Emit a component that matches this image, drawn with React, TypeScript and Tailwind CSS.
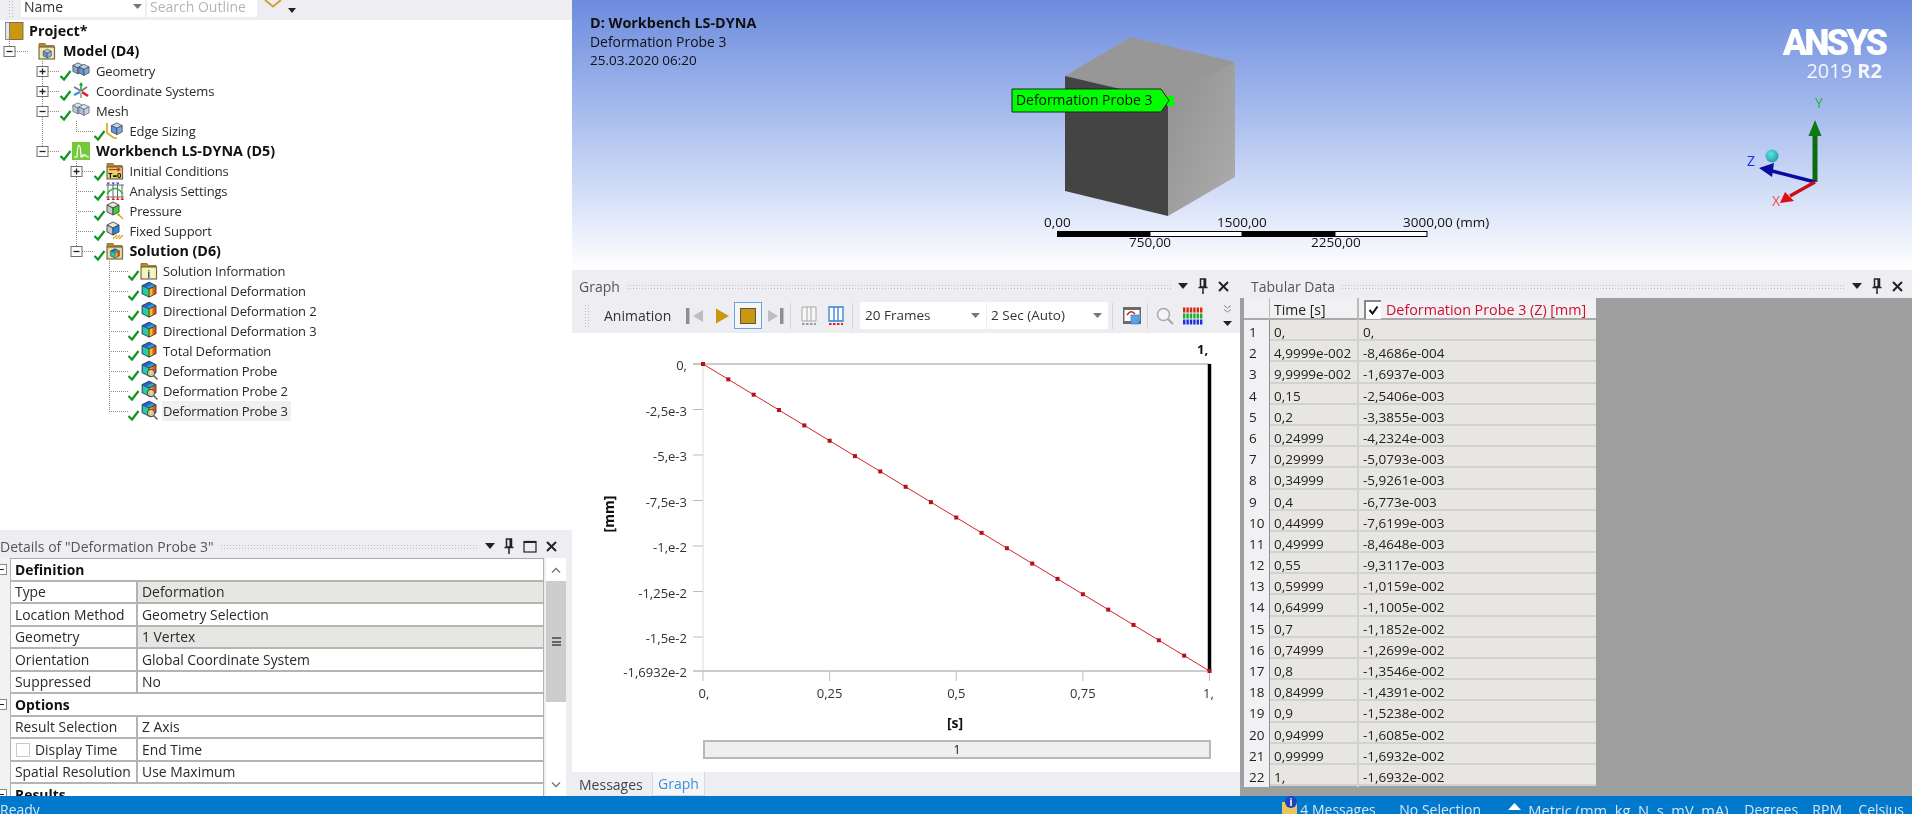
import React from "react";

const INK = "#222";

function Cube({ x = 0, y = 0, s = 1, t, l, r, e = "#4a4a4a" }: { x?: number; y?: number; s?: number; t: string; l: string; r: string; e?: string }) {
  return (
    <g transform={`translate(${x} ${y}) scale(${s})`} stroke={e} strokeWidth={0.9} strokeLinejoin="round">
      <polygon points="7,1 13,4 7,7 1,4" fill={t} />
      <polygon points="1,4 7,7 7,14 1,11" fill={l} />
      <polygon points="7,7 13,4 13,11 7,14" fill={r} />
    </g>
  );
}

function Folder({ fill = "#f4e9a8" }: { fill?: string }) {
  return (
    <g>
      <path d="M1 5 V1.5 H7 L8.5 3.5 H16 V5 Z" fill="#b98a1e" stroke="#7d5f16" strokeWidth={0.7} />
      <rect x={1} y={5} width={15.5} height={12} fill={fill} stroke="#6f6a58" strokeWidth={1.2} />
    </g>
  );
}

function Rainbow({ x = 0, y = 0, s = 1 }: { x?: number; y?: number; s?: number }) {
  return (
    <g transform={`translate(${x} ${y}) scale(${s})`} strokeLinejoin="round">
      <polygon points="7,1 13,4 7,7 1,4" fill="#15a9e0" />
      <polygon points="7,1 10,2.5 4,5.5 1,4" fill="#2a5de0" />
      <polygon points="1,4 7,7 7,14 1,11" fill="#35d27a" />
      <polygon points="1,4 4,5.5 4,12.5 1,11" fill="#19c7d8" />
      <polygon points="7,7 13,4 13,11 7,14" fill="#f2c21a" />
      <polygon points="10,5.5 13,4 13,11 10,12.5" fill="#e8531c" />
      <path d="M7 1 13 4 13 11 7 14 1 11 1 4Z M1 4 7 7 13 4 M7 7 V14" fill="none" stroke="#444" strokeWidth={0.9} />
    </g>
  );
}

function Icon({ name }: { name: string }) {
  switch (name) {
    case "book":
      return (
        <g>
          <rect x={4} y={0.5} width={14} height={17} fill="#c9980f" stroke="#5f5a48" strokeWidth={0.8} />
          <rect x={0.5} y={0.5} width={4} height={17} fill="#e6e6e6" stroke="#777" strokeWidth={0.8} />
        </g>
      );
    case "model":
      return (
        <g>
          <Folder />
          <Cube x={4.5} y={6.5} s={0.68} t="#a9c8ec" l="#5f95d8" r="#7db0e6" />
        </g>
      );
    case "geometry":
      return (
        <g>
          <Cube x={0} y={0} s={0.85} t="#bcd4ef" l="#7fa9dc" r="#95bbe6" />
          <Cube x={6} y={1.5} s={0.85} t="#bcd4ef" l="#5f95d8" r="#78a9e2" />
        </g>
      );
    case "mesh":
      return (
        <g>
          <Cube x={0} y={0} s={0.85} t="#dbe6f3" l="#b7c9df" r="#c6d6e9" e="#667" />
          <Cube x={6} y={1.5} s={0.85} t="#dbe6f3" l="#aebfd6" r="#c1d2e6" e="#667" />
        </g>
      );
    case "coord":
      return (
        <g strokeWidth={1.6} fill="none">
          <path d="M9 9 V2" stroke="#1aa82c" />
          <polygon points="9,0 6.8,3.5 11.2,3.5" fill="#1aa82c" />
          <path d="M9 9 L2 5" stroke="#777" />
          <path d="M9 9 L15 5" stroke="#777" />
          <path d="M8 10 L2 13" stroke="#3f8fe6" strokeWidth={2.4} />
          <path d="M10 10 L16 14" stroke="#e21b1b" strokeWidth={2.4} />
          <path d="M9 11 V16" stroke="#999" />
        </g>
      );
    case "edge":
      return (
        <g>
          <path d="M1 1 V11 L8 16 H11" fill="none" stroke="#d9a61e" strokeWidth={1.6} />
          <Cube x={4.5} y={0} s={0.9} t="#bcd4ef" l="#5f95d8" r="#78a9e2" />
        </g>
      );
    case "dyna":
      return (
        <g>
          <rect x={0} y={0} width={18} height={18} fill="#74c83c" />
          <path d="M2 15 H5 Q5.5 3 7 3 Q8.5 3 9 15 H10 Q11 11 12 14 Q13.5 11.5 15 15 H17" fill="none" stroke="#fff" strokeWidth={1.2} />
        </g>
      );
    case "initial":
      return (
        <g>
          <Folder fill="#e9d36a" />
          <path d="M3 7.5 H12.5" stroke="#d3271b" strokeWidth={1.2} />
          <polygon points="15,7.5 11.5,5.2 11.5,9.8" fill="#d3271b" />
          <text x={8.8} y={16} textAnchor="middle" className="text-[7.5px] font-bold" fill="#111">T=0</text>
        </g>
      );
    case "analysis":
      return (
        <g>
          <path d="M2 3 V15 M7 3 V15 M11.5 3 V15 M16 3 V15 M0 15 H18 M0 3 H18" stroke="#555" strokeWidth={0.9} fill="none" />
          <path d="M1 12 Q9 1 17 12" stroke="#2cb43a" strokeWidth={1.4} fill="none" />
          <path d="M0.5 0.5 H4 L2.2 3Z M5.5 0.5 H9 L7.2 3Z M10 0.5 H13.5 L11.7 3Z" fill="#2b4fd8" />
          <path d="M0.5 18 H4 L2.2 15Z M5.5 18 H9 L7.2 15Z M10 18 H13.5 L11.7 15Z M14.5 18 H18 L16.2 15Z" fill="#e2231a" />
        </g>
      );
    case "pressure":
      return (
        <g>
          <Cube x={0} y={-1} t="#e6e6e6" l="#c8c8c8" r="#35d43a" e="#444" />
          <path d="M12 12 L17 17" stroke="#d9a61e" strokeWidth={1.4} />
          <polygon points="11,11 14.5,12 12,14.5" fill="#d9a61e" />
        </g>
      );
    case "fixed":
      return (
        <g>
          <Cube x={0} y={-1} t="#e6e6e6" l="#c8c8c8" r="#1e88e8" e="#444" />
          <path d="M7 17 L11 13 M10 17 L14 13 M13 17 L17 13" stroke="#d9a61e" strokeWidth={1.2} />
        </g>
      );
    case "solution":
      return (
        <g>
          <Folder fill="#ead9a0" />
          <Rainbow x={4} y={6} s={0.72} />
        </g>
      );
    case "info":
      return (
        <g>
          <Folder fill="#fbf3b4" />
          <text x={8.8} y={15.5} textAnchor="middle" className="text-[10px] font-bold" fill="#1a5fd0">i</text>
        </g>
      );
    case "defo":
      return <Rainbow x={1} y={-1} s={1.15} />;
    case "probe":
      return (
        <g>
          <Rainbow x={1} y={-2} s={1.15} />
          <circle cx={11} cy={11} r={3.6} fill="#e8e2b0" fillOpacity={0.75} stroke="#555" strokeWidth={1.1} />
          <path d="M13.6 13.6 L17.5 17.5" stroke="#666" strokeWidth={1.6} />
        </g>
      );
    default:
      return null;
  }
}

type Node = { label: string; level: number; exp?: "+" | "-"; icon: string; bold?: boolean; next?: boolean; pass?: number[]; sel?: boolean };

const tree: Node[] = [
  { label: "Project*", level: 0, icon: "book", bold: true },
  { label: "Model (D4)", level: 1, exp: "-", icon: "model", bold: true },
  { label: "Geometry", level: 2, exp: "+", icon: "geometry", next: true },
  { label: "Coordinate Systems", level: 2, exp: "+", icon: "coord", next: true },
  { label: "Mesh", level: 2, exp: "-", icon: "mesh", next: true },
  { label: "Edge Sizing", level: 3, icon: "edge", pass: [42] },
  { label: "Workbench LS-DYNA (D5)", level: 2, exp: "-", icon: "dyna", bold: true },
  { label: "Initial Conditions", level: 3, exp: "+", icon: "initial", next: true },
  { label: "Analysis Settings", level: 3, icon: "analysis", next: true },
  { label: "Pressure", level: 3, icon: "pressure", next: true },
  { label: "Fixed Support", level: 3, icon: "fixed", next: true },
  { label: "Solution (D6)", level: 3, exp: "-", icon: "solution", bold: true },
  { label: "Solution Information", level: 4, icon: "info", next: true },
  { label: "Directional Deformation", level: 4, icon: "defo", next: true },
  { label: "Directional Deformation 2", level: 4, icon: "defo", next: true },
  { label: "Directional Deformation 3", level: 4, icon: "defo", next: true },
  { label: "Total Deformation", level: 4, icon: "defo", next: true },
  { label: "Deformation Probe", level: 4, icon: "probe", next: true },
  { label: "Deformation Probe 2", level: 4, icon: "probe", next: true },
  { label: "Deformation Probe 3", level: 4, icon: "probe", sel: true },
];

const guideX = [9, 9, 42, 76, 109];
const iconX = [5, 38, 72, 106, 140];
const textX = [29, 63, 96, 129.5, 163];

function TreeRow({ n }: { n: Node }) {
  const g = guideX[n.level];
  const ic = iconX[n.level];
  const w = textX[n.level];
  const dots = { stroke: "#8a8a8a", strokeDasharray: "1 1", strokeWidth: 1 };
  return (
    <div className="flex h-5 items-center">
      <svg width={w} height={20} className="shrink-0 overflow-visible">
        {(n.pass ?? []).map((p) => (
          <line key={p} x1={p + 0.5} x2={p + 0.5} y1={0} y2={20} {...dots} />
        ))}
        {n.level > 0 && <line x1={g + 0.5} x2={g + 0.5} y1={0} y2={n.next ? 20 : 10} {...dots} />}
        {n.level > 0 && <line x1={g} x2={n.level === 1 ? 28 : ic - 12} y1={10.5} y2={10.5} {...dots} />}
        {n.exp && (
          <g>
            <rect x={g - 5} y={5.5} width={11} height={10} fill="#fff" stroke="#6f6f6f" strokeWidth={1} />
            <path d={n.exp === "+" ? `M${g - 2.5} 10.5 H${g + 3.5} M${g + 0.5} 7.5 V13.5` : `M${g - 2.5} 10.5 H${g + 3.5}`} stroke="#222" strokeWidth={1.3} />
          </g>
        )}
        {n.level >= 2 && (
          <polyline points={`${ic - 11.5},15 ${ic - 8},18.5 ${ic - 1.5},10`} fill="none" stroke="#0f9420" strokeWidth={2.2} />
        )}
        <g transform={`translate(${ic} 1)`}>
          <Icon name={n.icon} />
        </g>
      </svg>
      <span className={`whitespace-nowrap leading-5 ${n.bold ? "text-[14.3px] font-bold text-[#111]" : "text-[13px] tracking-[-0.15px] text-[#2a2a2a]"} ${n.sel ? "-ml-[1px] bg-[#f0f0f0] pl-[1px] pr-[3px]" : ""}`}>{n.label}</span>
    </div>
  );
}

function Tools({ square }: { square?: boolean }) {
  return (
    <div className={`flex shrink-0 items-center ${square ? "gap-[9px]" : "gap-[10px]"}`}>
      <svg width={10} height={6}><polygon points="0,0 10,0 5,6" fill="#222" /></svg>
      <svg width={10} height={16}>
        <path d="M2.5 1 H7.5 V9 H2.5 Z M6.2 1.5 V9" fill="none" stroke="#222" strokeWidth={1.5} />
        <path d="M0.5 9.5 H9.5 M5 10 V16" stroke="#222" strokeWidth={1.5} />
      </svg>
      {square && (
        <svg width={14} height={13}>
          <rect x={1} y={1.5} width={12} height={10.5} fill="none" stroke="#222" strokeWidth={1.2} />
          <path d="M1 2 H13" stroke="#222" strokeWidth={2} />
        </svg>
      )}
      <svg width={11} height={11}><path d="M1 1 L10 10 M10 1 L1 10" stroke="#222" strokeWidth={2} /></svg>
    </div>
  );
}

function PaneHeader({ title, square, className }: { title: string; square?: boolean; className: string }) {
  return (
    <div className={`flex h-6 shrink-0 items-center gap-[6px] bg-[#eeeef2] ${className}`}>
      <span className="whitespace-nowrap text-[14px] text-[#555]">{title}</span>
      <div className="h-[5px] flex-1 bg-[radial-gradient(#bfc0c4_0.7px,transparent_0.8px)] bg-[length:3px_3px]" />
      <Tools square={square} />
    </div>
  );
}

const details: [string, string?, boolean?][] = [
  ["Definition"],
  ["Type", "Deformation", true],
  ["Location Method", "Geometry Selection"],
  ["Geometry", "1 Vertex", true],
  ["Orientation", "Global Coordinate System"],
  ["Suppressed", "No"],
  ["Options"],
  ["Result Selection", "Z Axis"],
  ["Display Time", "End Time"],
  ["Spatial Resolution", "Use Maximum"],
  ["Results"],
];

function Details() {
  return (
    <div className="flex min-h-0 flex-1 overflow-hidden">
      <div className="w-[10px] shrink-0 bg-[#f2f2f2]">
        {details.map(([k, v]) => (
          <div key={k} className="flex h-[22.5px] items-center">
            {v === undefined && (
              <div className="flex h-[11px] w-[7px] items-center border border-l-0 border-[#8a8a8a] bg-white">
                <div className="h-[1px] w-[4px] bg-[#222]" />
              </div>
            )}
          </div>
        ))}
      </div>
      <div className="w-[534px] shrink-0 border-t border-[#aaa] bg-white">
        {details.map(([k, v, grey]) =>
          v === undefined ? (
            <div key={k} className="flex h-[22.5px] items-center border-b-2 border-l border-r border-[#b4b4b4] pl-[4px] pt-[2px] text-[13.9px] font-bold text-[#111]">{k}</div>
          ) : (
            <div key={k} className="flex h-[22.5px] border-b-2 border-l border-r border-[#b4b4b4] text-[13.9px] text-[#2a2a2a]">
              <div className="flex w-[127px] shrink-0 items-center whitespace-nowrap border-r-2 border-[#b4b4b4] pl-[4px] pt-[2px]">
                {k === "Display Time" && <div className="mr-[5px] ml-[1px] h-[14px] w-[14px] border border-[#c8c8c8] bg-white" />}
                {k}
              </div>
              <div className={`flex flex-1 items-center pl-[4px] pt-[2px] ${grey ? "bg-[#e8e6e3]" : ""}`}>{v}</div>
            </div>
          ),
        )}
      </div>
      <div className="ml-[2px] flex w-[20px] shrink-0 flex-col bg-white">
        <div className="flex h-[23px] shrink-0 items-center justify-center">
          <svg width={10} height={6}><path d="M1 5.5 L5 1.5 L9 5.5" fill="none" stroke="#777" strokeWidth={1.4} /></svg>
        </div>
        <div className="flex h-[121px] shrink-0 items-center justify-center bg-[#cdcdcd]">
          <div className="h-[9px] w-[9px] border-y-2 border-[#666] py-[1.5px]"><div className="h-[2px] bg-[#666]" /></div>
        </div>
        <div className="flex-1" />
        <div className="flex h-[22px] shrink-0 items-center justify-center pb-[1px]">
          <svg width={10} height={6}><path d="M1 0.5 L5 4.5 L9 0.5" fill="none" stroke="#777" strokeWidth={1.4} /></svg>
        </div>
      </div>
    </div>
  );
}

function Viewport() {
  return (
    <div className="relative h-[270px] shrink-0 overflow-hidden bg-gradient-to-b from-[#6c8bdd] to-[#ffffff]">
      <div className="absolute left-[18px] top-[13px] text-[13.5px] leading-[19px] text-[#111]">
        <div className="text-[14.4px] font-bold">D: Workbench LS-DYNA</div>
        <div className="text-[13.9px]">Deformation Probe 3</div>
        <div>25.03.2020 06:20</div>
      </div>
      <span className="absolute left-[557px] top-[234px] text-[13.5px] leading-4 text-[#111]">750,00</span>
      <span className="absolute left-[739px] top-[234px] text-[13.5px] leading-4 text-[#111]">2250,00</span>
      <svg className="absolute inset-0" width={1340} height={270} viewBox="572 0 1340 270">
        <polygon points="1131,37 1235,62 1168,100 1065,76" fill="#979797" />
        <polygon points="1065,76 1168,100 1168,216 1065,191" fill="#444444" />
        <defs>
          <linearGradient id="rf" x1="0" y1="0" x2="1" y2="1">
            <stop offset="0" stopColor="#909090" />
            <stop offset="1" stopColor="#adadad" />
          </linearGradient>
          <radialGradient id="ball" cx="0.4" cy="0.35" r="0.7">
            <stop offset="0" stopColor="#5fe3e6" />
            <stop offset="1" stopColor="#1a9ea3" />
          </radialGradient>
        </defs>
        <polygon points="1168,100 1235,62 1235,177 1168,216" fill="url(#rf)" />
        <rect x={1167} y={96} width={7} height={10} fill="#00ff00" />
        <polygon points="1012,89 1161,89 1169,100.5 1161,112 1012,112" fill="#00ff00" stroke="#222" strokeWidth={1} />
        <rect x={1057} y={231} width={93} height={6} fill="#000" />
        <rect x={1150} y={231.5} width={92} height={5} fill="#fff" stroke="#000" strokeWidth={1} />
        <rect x={1242} y={231} width={93} height={6} fill="#000" />
        <rect x={1335} y={231.5} width={92} height={5} fill="#fff" stroke="#000" strokeWidth={1} />

        <path d="M1815 182 V132" stroke="#0d6b12" strokeWidth={5} />
        <polygon points="1815,120 1808.5,136 1821.5,136" fill="#0d7a14" />
        <path d="M1815 182 L1772 171" stroke="#0a0ca0" strokeWidth={3.5} />
        <polygon points="1759,168 1774,163 1772,177" fill="#0a0ca0" />
        <path d="M1815 182 L1790 196" stroke="#c8101a" strokeWidth={3.5} />
        <polygon points="1780,203 1785,192 1794,201" fill="#e00d12" />
        <circle cx={1772} cy={156} r={6.5} fill="url(#ball)" />
      </svg>
      <div className="absolute left-[440px] top-[89px] flex h-[23px] items-center pl-[4px] text-[13.9px] text-[#111]">Deformation Probe 3</div>
      <span className="absolute left-[472px] top-[214px] text-[13.5px] leading-4 text-[#111]">0,00</span>
      <span className="absolute left-[645px] top-[214px] text-[13.5px] leading-4 text-[#111]">1500,00</span>
      <span className="absolute left-[831px] top-[214px] whitespace-nowrap text-[13.5px] leading-4 text-[#111]">3000,00 (mm)</span>
      <div className="absolute right-[27px] top-[23px] flex flex-col items-end text-white">
        <div className="font-[family-name:Roboto] text-[36px] font-black leading-[40px] tracking-[-3px]">ANSYS</div>
        <div className="-mt-[3px] mr-[3px] text-[20px] leading-[22px] opacity-90">2019 <span className="font-bold">R2</span></div>
      </div>
      <span className="absolute left-[1243px] top-[95px] text-[14px] leading-4 text-[#1fb52f]">Y</span>
      <span className="absolute left-[1175px] top-[153px] text-[14px] leading-4 text-[#1a2cf0]">Z</span>
      <span className="absolute left-[1200px] top-[193px] text-[14px] leading-4 text-[#f04a4a]">X</span>
    </div>
  );
}

function GraphToolbar() {
  return (
    <div className="flex h-[35px] shrink-0 items-center bg-[#eeeef2] pl-[12px]">
      <div className="h-[24px] w-[5px] shrink-0 bg-[radial-gradient(#b9babe_0.7px,transparent_0.8px)] bg-[length:3px_3px]" />
      <span className="ml-[15px] w-[81px] shrink-0 text-[14px] text-[#333]">Animation</span>
      <svg width={20} height={18} className="shrink-0"><rect x={1} y={1} width={3.5} height={16} fill="#8f8f8f" /><polygon points="18,3 18,15 8,9" fill="#bdbdbd" /></svg>
      <svg width={16} height={18} className="ml-[9px] shrink-0"><polygon points="2,1.5 15,9 2,16.5" fill="#c9980f" /></svg>
      <div className="ml-[4px] flex h-[27px] w-[28px] shrink-0 items-center justify-center border border-[#62a8e8] bg-[#f5f5f5]">
        <div className="h-[16px] w-[16px] border border-[#555] bg-[#c9980f]" />
      </div>
      <svg width={20} height={18} className="ml-[4px] shrink-0"><polygon points="2,3 2,15 12,9" fill="#bdbdbd" /><rect x={14} y={1} width={3.5} height={16} fill="#8f8f8f" /></svg>
      <div className="ml-[4px] h-[26px] w-[1px] shrink-0 bg-[#d4d4d8]" />
      <svg width={22} height={22} className="ml-[8px] shrink-0">
        <path d="M3 2 H17 V16 H3 Z M8 2 V16 M12 2 V16" fill="#f6f6f6" stroke="#a8a8a8" strokeWidth={1} />
        <path d="M3 19 H17" stroke="#999" strokeWidth={2} strokeDasharray="2.5 1.5" />
      </svg>
      <svg width={22} height={22} className="ml-[5px] shrink-0">
        <path d="M3 2 H17 V16 H3 Z M8 2 V16 M12 2 V16" fill="#fff" stroke="#2f7fd6" strokeWidth={1.3} />
        <path d="M3 19 H17" stroke="#e2231a" strokeWidth={2} strokeDasharray="2.5 1.5" />
      </svg>
      <div className="ml-[4px] h-[26px] w-[1px] shrink-0 bg-[#d4d4d8]" />
      <div className="ml-[7px] flex h-[27px] w-[126px] shrink-0 items-center justify-between bg-white pl-[5px] pr-[6px] text-[13.5px] text-[#333]">
        <span>20 Frames</span>
        <svg width={9} height={5}><polygon points="0,0 9,0 4.5,5" fill="#777" /></svg>
      </div>
      <div className="ml-[1px] flex h-[27px] w-[121px] shrink-0 items-center justify-between bg-white pl-[4px] pr-[6px] text-[13.5px] text-[#333]">
        <span>2 Sec (Auto)</span>
        <svg width={9} height={5}><polygon points="0,0 9,0 4.5,5" fill="#777" /></svg>
      </div>
      <div className="ml-[4px] h-[26px] w-[1px] shrink-0 bg-[#d4d4d8]" />
      <svg width={20} height={20} className="ml-[9px] shrink-0">
        <rect x={1} y={1} width={18} height={17} fill="#6a6a6a" />
        <rect x={2.5} y={4} width={15} height={11} fill="#fff" />
        <path d="M5 9 Q9 3 13 8" fill="none" stroke="#d3271b" strokeWidth={1.6} />
        <rect x={9} y={9} width={8} height={9} fill="#5aa4e6" stroke="#2a6fc0" strokeWidth={0.6} />
      </svg>
      <div className="ml-[5px] h-[26px] w-[1px] shrink-0 bg-[#d4d4d8]" />
      <svg width={18} height={18} className="ml-[8px] shrink-0">
        <circle cx={7.5} cy={7.5} r={6} fill="#f4f4f4" stroke="#a9a9a9" strokeWidth={1.5} />
        <path d="M12 12 L17 17" stroke="#a9a9a9" strokeWidth={2.2} />
      </svg>
      <svg width={20} height={18} className="ml-[9px] shrink-0">
        <path d="M0 3 H20" stroke="#e2231a" strokeWidth={5} strokeDasharray="2.4 1" />
        <path d="M0 9 H20" stroke="#17b32a" strokeWidth={5} strokeDasharray="2.4 1" />
        <path d="M0 15 H20" stroke="#1f2fe0" strokeWidth={5} strokeDasharray="2.4 1" />
      </svg>
      <div className="ml-[20px] flex shrink-0 flex-col items-center gap-[7px]">
        <svg width={9} height={9}><path d="M1 0.5 L4.5 3 L8 0.5 M1 4.5 L4.5 7 L8 4.5" fill="none" stroke="#888" strokeWidth={1} /></svg>
        <svg width={9} height={5}><polygon points="0,0 9,0 4.5,5" fill="#222" /></svg>
      </div>
    </div>
  );
}

function Chart() {
  const X0 = 131, X1 = 637.5, Y0 = 31, Y1 = 338, step = 45.5;
  const xt = [[0, "0,"], [0.25, "0,25"], [0.5, "0,5"], [0.75, "0,75"], [1, "1,"]] as const;
  const yt = ["0,", "-2,5e-3", "-5,e-3", "-7,5e-3", "-1,e-2", "-1,25e-2", "-1,5e-2"];
  const pts = Array.from({ length: 21 }, (_, i) => [X0 + ((X1 - X0) * i) / 20, Y0 + ((Y1 - Y0) * i) / 20]);
  return (
    <svg width={666} height={400} className="block shrink-0 text-[13px]">
      <line x1={X0} x2={X0} y1={Y0} y2={Y1} stroke="#dcdcdc" />
      <line x1={121} x2={X1} y1={Y0} y2={Y0} stroke="#bdbdbd" strokeWidth={1.5} />
      <line x1={121} x2={X1} y1={Y1} y2={Y1} stroke="#bdbdbd" strokeWidth={1.5} />
      {yt.map((t, i) => (
        <g key={t}>
          <line x1={121} x2={X0} y1={Y0 + step * i} y2={Y0 + step * i} stroke="#bdbdbd" />
          <text x={115} y={Y0 + step * i + 6} textAnchor="end" fill="#333">{t}</text>
        </g>
      ))}
      <text x={115} y={Y1 + 6} textAnchor="end" fill="#333">-1,6932e-2</text>
      {xt.map(([v, t]) => (
        <g key={t}>
          <line x1={X0 + (X1 - X0) * v} x2={X0 + (X1 - X0) * v} y1={Y1} y2={Y1 + 10} stroke="#bdbdbd" />
          <text x={X0 + (X1 - X0) * v + (v === 0 ? 1 : v === 1 ? -1 : 0)} y={Y1 + 27} textAnchor="middle" fill="#333">{t}</text>
        </g>
      ))}
      <text x={383} y={395} textAnchor="middle" className="text-[14px] font-bold" fill="#111">[s]</text>
      <text transform="translate(42 181) rotate(-90)" textAnchor="middle" className="text-[14px] font-bold" fill="#111">[mm]</text>
      <text x={625} y={21} className="text-[13px] font-bold" fill="#111">1,</text>
      <line x1={X1} x2={X1} y1={Y0} y2={Y1} stroke="#000" strokeWidth={3.5} />
      <polyline points={pts.map((p) => p.join(",")).join(" ")} fill="none" stroke="#d9232a" strokeWidth={1} />
      {pts.map((p) => (
        <rect key={p[0]} x={p[0] - 2} y={p[1] - 2} width={4} height={4} fill="#b5101c" />
      ))}
    </svg>
  );
}

function Graph() {
  return (
    <div className="flex w-[668px] shrink-0 flex-col">
      <PaneHeader title="Graph" className="ml-[3px] pl-[4px] pr-[11px]" />
      <GraphToolbar />
      <div className="flex min-h-0 flex-1 flex-col bg-white">
        <div className="flex-1 overflow-visible">
          <Chart />
        </div>
        <div className="mb-[14px] ml-[131px] mt-[7px] flex h-[19px] w-[508px] items-center justify-center border-2 border-[#b8b8b8] bg-[#efefef] text-[13px] text-[#222]">1</div>
      </div>
      <div className="flex h-6 shrink-0 items-end bg-[#eeeef2] pl-[2px] text-[14px]">
        <div className="flex h-full w-[78px] items-center pl-[5px] text-[#444]">Messages</div>
        <div className="flex h-full w-[53px] items-center justify-center border-x border-b border-[#dadade] bg-[#f6f6f9] text-[#3a8fd6]">Graph</div>
      </div>
    </div>
  );
}

const rows: [string, string][] = [
  ["0,", "0,"], ["4,9999e-002", "-8,4686e-004"], ["9,9999e-002", "-1,6937e-003"], ["0,15", "-2,5406e-003"],
  ["0,2", "-3,3855e-003"], ["0,24999", "-4,2324e-003"], ["0,29999", "-5,0793e-003"], ["0,34999", "-5,9261e-003"],
  ["0,4", "-6,773e-003"], ["0,44999", "-7,6199e-003"], ["0,49999", "-8,4648e-003"], ["0,55", "-9,3117e-003"],
  ["0,59999", "-1,0159e-002"], ["0,64999", "-1,1005e-002"], ["0,7", "-1,1852e-002"], ["0,74999", "-1,2699e-002"],
  ["0,8", "-1,3546e-002"], ["0,84999", "-1,4391e-002"], ["0,9", "-1,5238e-002"], ["0,94999", "-1,6085e-002"],
  ["0,99999", "-1,6932e-002"], ["1,", "-1,6932e-002"],
];

function Tabular() {
  return (
    <div className="flex min-w-0 flex-1 flex-col">
      <PaneHeader title="Tabular Data" className="ml-[4px] pl-[7px] pr-[9px]" />
      <div className="flex min-h-0 flex-1 bg-[#9f9f9f] pl-[4px]">
        <div className="w-[352px] shrink-0 text-[13.5px] text-[#222]">
          <div className="grid h-[22px] grid-cols-[26px_89px_237px] border-b-2 border-[#a9a9a9] bg-[#f1f1f3]">
            <div className="border-r border-[#bbb]" />
            <div className="flex items-center border-r-2 border-[#bbb] pl-[4px] pt-[1px] text-[14px]">Time [s]</div>
            <div className="flex items-center pl-[5px] text-[#cf1030]">
              <div className="mr-[5px] flex h-[19px] w-[17px] items-center justify-center border-l-2 border-t-2 border-[#888] bg-white">
                <svg width={11} height={10}><path d="M1.5 5 L4.5 8.5 L9.5 1.5" fill="none" stroke="#111" strokeWidth={2} /></svg>
              </div>
              <span className="whitespace-nowrap pt-[1px] text-[14.3px]">Deformation Probe 3 (Z) [mm]</span>
            </div>
          </div>
          {rows.map(([a, b], i) => (
            <div key={i} className="grid h-[21.2px] grid-cols-[26px_89px_237px] border-b-2 border-[#d2d2d2] bg-[#e8e6e3]">
              <div className="flex items-center border-r border-[#8f8f8f] bg-[#f1f1f3] pl-[5px] pt-[2px]">{i + 1}</div>
              <div className="flex items-center border-r-2 border-[#d2d2d2] pl-[4px] pt-[2px]">{a}</div>
              <div className="flex items-center pl-[4px] pt-[2px]">{b}</div>
            </div>
          ))}
        </div>
      </div>
    </div>
  );
}

function Left() {
  return (
    <div className="flex w-[572px] shrink-0 flex-col bg-[#eeeef2]">
      <div className="flex h-5 shrink-0 items-start pl-[8px] text-[14px]">
        <div className="h-[18px] w-[5px] bg-[radial-gradient(#b9babe_0.7px,transparent_0.8px)] bg-[length:3px_3px]" />
        <div className="ml-[8px] flex h-[17px] w-[124px] items-center justify-between overflow-hidden bg-white pb-[4px] pl-[3px] pr-[3px] text-[#333]">
          <span>Name</span>
          <svg width={9} height={5}><polygon points="0,0 9,0 4.5,5" fill="#777" /></svg>
        </div>
        <div className="ml-[2px] flex h-[17px] w-[110px] items-center overflow-hidden whitespace-nowrap bg-white pb-[4px] pl-[3px] text-[#b4b4b4]">Search Outline</div>
        <svg width={18} height={8} className="ml-[7px] shrink-0"><path d="M1 0 L9 6.5 L17 0" fill="none" stroke="#d3a233" strokeWidth={2} /></svg>
        <svg width={8} height={5} className="ml-[6px] mt-[8px] shrink-0"><polygon points="0,0 8,0 4,5" fill="#222" /></svg>
      </div>
      <div className="h-[510px] shrink-0 overflow-hidden bg-white pt-[1px]">
        {tree.map((n) => (
          <TreeRow key={n.label} n={n} />
        ))}
      </div>
      <div className="h-[4px] shrink-0" />
      <PaneHeader title={'Details of "Deformation Probe 3"'} square className="pr-[15px]" />
      <Details />
    </div>
  );
}

function Status() {
  return (
    <div className="flex h-[18px] shrink-0 items-start justify-between overflow-hidden bg-[#0078cc] pt-[4px] text-[14px] leading-5 text-[#d5e6f4]">
      <span>Ready</span>
      <div className="flex items-start pr-[8px]">
        <svg width={19} height={18} className="-mt-[4px] shrink-0">
          <rect x={1} y={6} width={15} height={12} fill="#e8c65c" />
          <circle cx={10} cy={6} r={6} fill="#2340c0" />
          <text x={10} y={10} textAnchor="middle" className="text-[10px] font-bold" fill="#fff">i</text>
        </svg>
        <span className="w-[99px] whitespace-nowrap">4 Messages</span>
        <span className="w-[109px] whitespace-nowrap">No Selection</span>
        <svg width={13} height={7} className="mt-[3px] shrink-0"><polygon points="0,7 13,7 6.5,0" fill="#fff" /></svg>
        <span className="ml-[7px] w-[216px] whitespace-nowrap text-[14.7px]">Metric (mm, kg, N, s, mV, mA)</span>
        <span className="w-[68px]">Degrees</span>
        <span className="w-[46px]">RPM</span>
        <span>Celsius</span>
      </div>
    </div>
  );
}

export default function App() {
  return (
    <div className="flex h-[814px] w-[1912px] flex-col overflow-hidden bg-[#eeeef2] font-[family-name:'Open_Sans',sans-serif] blur-[0.35px]" style={{ color: INK }}>
      <div className="flex min-h-0 flex-1">
        <Left />
        <div className="flex min-w-0 flex-1 flex-col">
          <Viewport />
          <div className="h-[4px] shrink-0" />
          <div className="flex min-h-0 flex-1">
            <Graph />
            <Tabular />
          </div>
        </div>
      </div>
      <Status />
    </div>
  );
}
